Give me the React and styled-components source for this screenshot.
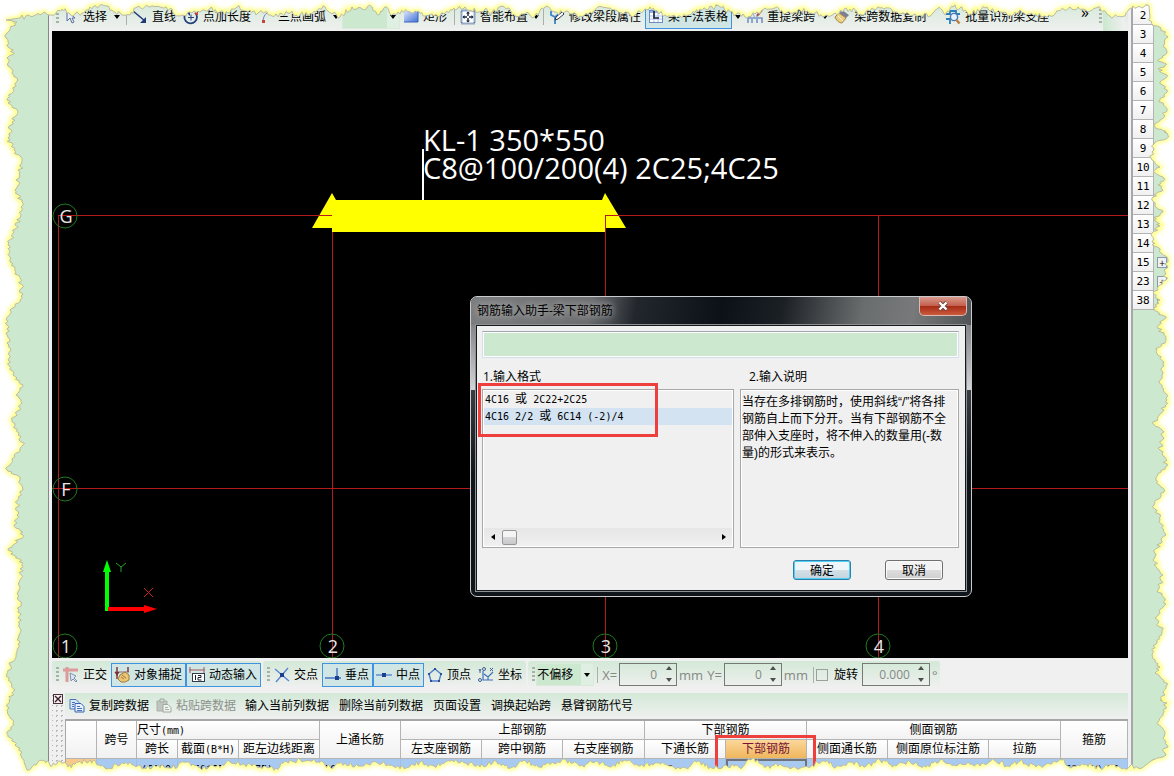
import { useState } from 'react';
import styled, { createGlobalStyle, css } from 'styled-components';

const GREEN = '#cce8cf';

const ROW_NUMBERS = [2, 3, 4, 5, 6, 7, 8, 9, 10, 11, 12, 13, 14, 15, 23, 38];
const EXPANDABLE = [15, 23, 38];

const FORMATS = [
  ['4C16 ', '或', ' 2C22+2C25'],
  ['4C16 2/2 ', '或', ' 6C14 (-2)/4'],
];

const COLUMNS = [31, 40, 41, 61, 81, 81, 81, 81, 82, 81, 81, 81, 101, 72, null];

const TOP = [
  [20, 18], [30, 16], [36, 15], [44, 12], [50, 15], [56, 13], [62, 9], [70, 14], [75, 14], [82, 13], [90, 7], [107, 6],
  [115, 12], [122, 15], [130, 15], [137, 7], [150, 7], [160, 7], [172, 9], [175, 15], [180, 16], [190, 12], [200, 12],
  [210, 8], [217, 13], [228, 13], [237, 7], [250, 10], [256, 15], [265, 12], [272, 16], [288, 13], [300, 15], [316, 12],
  [325, 7], [332, 14], [340, 17], [352, 7], [362, 9], [371, 6], [378, 15], [385, 7], [393, 14], [398, 12], [415, 11],
  [425, 16], [432, 14], [440, 16], [452, 10], [465, 7], [478, 12], [485, 9], [490, 16], [498, 8], [508, 8], [515, 16],
  [525, 14], [535, 16], [545, 7], [555, 12], [570, 14], [580, 16], [590, 12], [598, 7], [610, 8], [625, 12], [635, 15],
  [645, 9], [650, 7], [655, 11], [665, 15], [680, 16], [690, 15], [700, 9], [720, 7], [730, 12], [745, 17], [755, 14],
  [765, 8], [775, 8], [785, 14], [795, 12], [800, 10], [815, 13], [825, 16], [835, 13], [850, 9], [860, 14], [870, 11],
  [880, 8], [895, 12], [915, 14], [930, 16], [938, 8], [945, 15], [953, 7], [960, 8], [970, 14], [985, 8], [1000, 12],
  [1010, 15], [1020, 10], [1030, 14], [1045, 16], [1055, 14], [1070, 7], [1090, 11], [1098, 7], [1110, 16], [1125, 16],
  [1133, 6], [1142, 8], [1149, 6],
];

const RIGHT = [
  [1150, 18], [1153, 25], [1160, 27], [1168, 37], [1164, 45], [1167, 52], [1158, 60], [1166, 65], [1158, 69], [1167, 75],
  [1160, 82], [1167, 90], [1160, 100], [1167, 110], [1160, 120], [1153, 126], [1167, 133], [1166, 139], [1155, 142],
  [1152, 152], [1152, 160], [1160, 167], [1153, 172], [1164, 178], [1158, 185], [1163, 190], [1153, 197], [1155, 205],
  [1163, 212], [1153, 220], [1160, 226], [1152, 233], [1152, 242], [1160, 250], [1168, 260], [1164, 270], [1166, 280],
  [1160, 285], [1153, 293], [1160, 300], [1153, 308], [1166, 318], [1158, 326], [1166, 340], [1157, 350], [1164, 362],
  [1160, 380], [1167, 400], [1159, 415], [1153, 424], [1164, 432], [1160, 450], [1167, 466], [1156, 478], [1164, 492],
  [1154, 505], [1160, 520], [1166, 535], [1157, 548], [1153, 560], [1163, 575], [1158, 590], [1166, 604], [1155, 618],
  [1162, 630], [1157, 642], [1152, 655], [1160, 667], [1155, 673], [1167, 685], [1165, 695], [1160, 700], [1167, 703],
  [1163, 710], [1158, 722], [1165, 732], [1163, 738], [1167, 745], [1163, 757], [1151, 761],
];

const BOTTOM = [
  [1142, 768], [1130, 766], [1122, 769], [1112, 765], [1100, 768], [1086, 764], [1072, 767], [1062, 760], [1050, 764],
  [1036, 767], [1020, 761], [1008, 766], [994, 760], [980, 766], [968, 762], [954, 765], [940, 760], [926, 767],
  [910, 762], [896, 766], [880, 760], [866, 766], [850, 762], [836, 767], [824, 761], [812, 765], [796, 768], [780, 764],
  [766, 767], [752, 759], [740, 768], [726, 765], [712, 768], [698, 761], [686, 768], [670, 766], [655, 763], [640, 766],
  [624, 760], [610, 767], [596, 761], [580, 766], [566, 760], [552, 762], [540, 767], [524, 760], [510, 768], [496, 761],
  [480, 767], [466, 763], [450, 761], [434, 766], [420, 762], [406, 768], [392, 765], [376, 762], [360, 766], [345, 763],
  [330, 767], [318, 762], [304, 761], [290, 760], [276, 768], [260, 767], [244, 764], [230, 762], [216, 767], [200, 768],
  [186, 762], [170, 768], [158, 765], [144, 768], [130, 762], [118, 766], [104, 767], [90, 760], [78, 762], [68, 767],
  [60, 761], [52, 766], [44, 760], [36, 765], [27, 770],
];

const LEFT = [
  [24, 762], [20, 748], [8, 735], [13, 720], [7, 710], [9, 700], [15, 690], [8, 680], [10, 665], [17, 650], [21, 630],
  [19, 610], [19, 590], [23, 563], [8, 550], [23, 535], [14, 525], [17, 515], [18, 500], [23, 490], [20, 478], [7, 470],
  [12, 460], [23, 445], [18, 435], [12, 420], [22, 403], [16, 395], [23, 385], [13, 375], [8, 360], [9, 345], [7, 325],
  [10, 310], [20, 300], [22, 288], [16, 272], [10, 262], [8, 245], [14, 232], [20, 218], [23, 205], [15, 190], [19, 178],
  [22, 162], [14, 150], [8, 138], [12, 122], [18, 112], [7, 100], [14, 90], [17, 78], [8, 66], [7, 58], [14, 53], [8, 47],
  [6, 38], [10, 30], [17, 22], [6, 20],
];

// same rough outline on every render
const tornPath = () => {
  let seed = 7;
  const rand = () => {
    seed = (seed * 16807) % 2147483647;
    return seed / 2147483647 - 0.5;
  };
  const side = (points, horizontal) => {
    const out = [];
    points.forEach(([x, y], i) => {
      out.push([x, y]);
      const next = points[i + 1];
      if (!next) return;
      const steps = Math.max(1, Math.round(Math.hypot(next[0] - x, next[1] - y) / 2));
      for (let s = 1; s < steps; s++) {
        const px = x + ((next[0] - x) * s) / steps;
        const py = y + ((next[1] - y) * s) / steps;
        const n = rand() * 5;
        out.push(horizontal ? [px, py + n] : [px + n, py]);
      }
    });
    return out;
  };
  const all = [...side(TOP, true), ...side(RIGHT, false), ...side(BOTTOM, true), ...side(LEFT, false)];
  return `M${all.map(([x, y]) => `${x.toFixed(1)} ${y.toFixed(1)}`).join('L')}Z`;
};

const TORN = tornPath();

const TornEdge = () => (
  <Torn viewBox="0 0 1174 776" preserveAspectRatio="none" aria-hidden="true">
    <defs>
      <clipPath id="outside">
        <path d={`M0 0H1174V776H0Z${TORN}`} clipRule="evenodd" />
      </clipPath>
      <filter id="glow" x="-5%" y="-5%" width="110%" height="110%">
        <feGaussianBlur stdDeviation="2" />
      </filter>
    </defs>
    <g clipPath="url(#outside)">
      <rect width="1174" height="776" fill="#fff" />
      <path d={TORN} fill="none" stroke="#ffff70" strokeWidth="4" filter="url(#glow)" />
    </g>
    <path d={TORN} fill="none" stroke="#b9baa6" strokeWidth="1" />
  </Torn>
);

const Icon = ({ children }) => (
  <svg width="16" height="16" viewBox="0 0 16 16" fill="none" aria-hidden="true">
    {children}
  </svg>
);

const SelectIcon = () => (
  <Icon>
    <path d="M4 2v10l3-3 2 5 2-1-2-4h3z" fill="#e8eefa" stroke="#5a6f9c" />
  </Icon>
);

const LineIcon = () => (
  <Icon>
    <path d="M1 2l12 10" stroke="#1f3c78" strokeWidth="1.6" />
    <path d="M14 14V8l-6 6z" fill="#1f3c78" />
  </Icon>
);

const CircleIcon = () => (
  <Icon>
    <path d="M12 3.5A6.3 6.3 0 1 1 4 3" stroke="#24417c" strokeWidth="1.8" />
    <path d="M1 1h6v6z" fill="#24417c" />
    <path d="M8 5.500v6M5 8.500h6" stroke="#24417c" />
    <rect x="12" y="3" width="3" height="3" fill="#c8423c" />
  </Icon>
);

const ArcIcon = () => (
  <Icon>
    <path d="M5 13C5 7 8 3 14 2" stroke="#6d7fae" />
    <rect x="4" y="11" width="3" height="3" fill="#c8423c" />
    <rect x="13" y="1" width="2" height="2" fill="#c8423c" />
  </Icon>
);

const RectIcon = () => (
  <Icon>
    <rect x="1" y="2" width="14" height="11" fill="url(#blueFade)" />
    <path d="M1 13h14V2" stroke="#3a62b8" />
    <defs>
      <linearGradient id="blueFade" x1="0" y1="0" x2="1" y2="1">
        <stop offset="0" stopColor="#dbe6fb" />
        <stop offset="1" stopColor="#3f6fd6" />
      </linearGradient>
    </defs>
  </Icon>
);

const LayoutIcon = () => (
  <Icon>
    <rect x="1.500" y="1.500" width="13" height="13" fill="#fff" stroke="#3c5c96" strokeDasharray="1 1" strokeWidth="2" />
    <path d="M8 3v4M8 9v4M3 8h4M9 8h4" stroke="#1c2740" strokeWidth="1.4" />
    <path d="M8 2.500l2 2H6zM8 13.500l2-2H6zM2.500 8l2-2v4zM13.500 8l-2-2v4z" fill="#1c2740" />
  </Icon>
);

const EditIcon = () => (
  <Icon>
    <path d="M2 2v4l4 2v7M6 8l4-3" stroke="#3a86c8" strokeWidth="1.8" />
    <path d="M6 11l1-3 6-5 2 2-6 5z" fill="#fff" stroke="#2d3442" />
  </Icon>
);

const TableIcon = () => (
  <Icon>
    <rect x="1.500" y="1.500" width="13" height="12" fill="#fff" stroke="#6a8bc4" />
    <path d="M2 3h12" stroke="#8fb0e4" strokeWidth="2" />
    <path d="M2 7h12M2 10h12M6 4v9M10 4v9" stroke="#a7bfe6" />
    <path d="M6 2v7h5" stroke="#15203c" strokeWidth="1.6" />
  </Icon>
);

const SpanIcon = () => (
  <Icon>
    <path d="M1 14V9h14v5M5 14v-4M10 14v-4" stroke="#7693c6" strokeWidth="1.6" />
    <path d="M2 9l3-6 3 6M9 9l2-5" stroke="#93a9cf" />
    <path d="M10 7l5-6" stroke="#b0574f" strokeWidth="2" />
  </Icon>
);

const BrushIcon = () => (
  <Icon>
    <path d="M8 1l7 5-3 3-7-5z" fill="#7a7f96" />
    <path d="M5 4l7 5-4 5C5 14 2 11 1 8z" fill="#e9cf86" stroke="#a8863c" />
    <path d="M4 7l5 5" stroke="#fff4d0" />
  </Icon>
);

const FindIcon = () => (
  <Icon>
    <path d="M1 5h4V1M11 1v4h4M1 10h4v5M11 2H5" stroke="#2c7fb8" strokeWidth="1.8" />
    <circle cx="9" cy="8" r="3.600" fill="#e6f2ff" stroke="#4877b0" strokeWidth="1.4" />
    <path d="M11.500 11l3 3.500" stroke="#c07a3a" strokeWidth="2.400" />
  </Icon>
);

const OrthoIcon = () => (
  <Icon>
    <path d="M0 3h15M4 0v15" stroke="#dd9a9a" strokeWidth="3" />
    <path d="M7 6l1 8 2-2 3 3 1-1-3-3 2-2z" fill="#dce6f2" stroke="#7d93ad" />
  </Icon>
);

const SnapIcon = () => (
  <Icon>
    <path d="M1 5h14" stroke="#8b6b6b" />
    <path d="M3 0v12M14 0v5" stroke="#7a2f38" strokeWidth="1.400" />
    <path d="M0.500 5l2.500 4 2.500-4z" fill="#7a2f38" />
    <path d="M6 8l5-3 4 3v5l-4 2H7l-3-3z" fill="#ecc677" stroke="#a27a35" />
    <path d="M8 8l4 3M7 10l3 2" stroke="#a27a35" />
  </Icon>
);

const DynamicIcon = () => (
  <Icon>
    <path d="M0 3h16M1 0v6M15 0v6" stroke="#a3585c" />
    <rect x="3.500" y="6.500" width="12" height="8" fill="#fff" stroke="#333b4a" />
    <path d="M6.500 8v5M9 8.500h3v2H9v2.500h3.500" stroke="#1b2230" />
  </Icon>
);

const CrossIcon = () => (
  <Icon>
    <path d="M1 2l14 12M14 1L2 15" stroke="#5a84d2" strokeWidth="1.400" />
    <rect x="6" y="6" width="4" height="4" fill="#1d3f8f" />
  </Icon>
);

const PerpIcon = () => (
  <Icon>
    <path d="M0 11h16M12 1v10" stroke="#4474c4" strokeWidth="1.400" />
    <rect x="10" y="9" width="4" height="4" fill="#1d3f8f" />
  </Icon>
);

const MidIcon = () => (
  <Icon>
    <path d="M0 8h16" stroke="#5a84d2" strokeWidth="1.400" />
    <rect x="6" y="6" width="4" height="4" fill="#1d3f8f" />
  </Icon>
);

const VertexIcon = () => (
  <Icon>
    <path d="M8 2l6 5-2 7H4L2 7z" stroke="#4f7cc8" strokeWidth="1.400" />
    <path d="M7 1h2v2H7zM1 6h2v2H1zM13 6h2v2h-2zM3 13h2v2H3zM11 13h2v2h-2z" fill="#2a4f9c" />
  </Icon>
);

const CoordIcon = () => (
  <Icon>
    <path d="M5 4v9h10M6 7l4 3 5-5M10 10v3" stroke="#3c70b8" strokeWidth="1.200" />
    <circle cx="6" cy="2" r="1.500" stroke="#3c5f98" />
    <circle cx="2" cy="13" r="1.500" stroke="#3c5f98" />
    <path d="M1 2l1 2 1-2M2 4v2M12 1l3 3M15 1l-3 3" stroke="#3c5f98" />
  </Icon>
);

const CopyIcon = () => (
  <Icon>
    <path d="M1 1.500h6l3 3V11H1z" fill="#d9e6fb" stroke="#4b74b8" />
    <path d="M6 5.500h6l3 3V14H6z" fill="#e8f0ff" stroke="#3864ad" />
    <path d="M8 8.500h3M8 10.500h5M8 12.500h5M3 4.500h3M3 6.500h2M3 8.500h2" stroke="#4b74b8" />
  </Icon>
);

const PasteIcon = () => (
  <Icon>
    <path d="M1 3h10v10H1z" fill="#bfc6bf" stroke="#a9b1a9" />
    <path d="M4 1h4v3H4z" fill="#d9ded9" stroke="#a0a8a0" />
    <path d="M7 6.500h5l3 3V14H7z" fill="#eef2ee" stroke="#a0a8a0" />
    <path d="M9 9.500h3M9 11.500h4" stroke="#a9b1a9" />
  </Icon>
);

const Triangle = ({ dir = 'down' }) => {
  const shapes = { down: 'M0 1h6L3 5z', up: 'M0 4h6L3 0z', left: 'M5 0v6L1 3z', right: 'M1 0v6l4-3z' };
  return (
    <svg width="6" height="6" viewBox="0 0 6 6" aria-hidden="true">
      <path d={shapes[dir]} fill="currentColor" />
    </svg>
  );
};

const Tool = ({ icon, label, active, disabled }) => (
  <ToolButton type="button" $active={active} disabled={disabled}>
    {icon}
    {label}
  </ToolButton>
);

const Spinner = ({ id, value, wide }) => (
  <SpinBox $wide={wide}>
    <SpinInput id={id} defaultValue={value} disabled />
    <SpinArrows>
      <SpinButton type="button" aria-label="增加">
        <Triangle dir="up" />
      </SpinButton>
      <SpinButton type="button" aria-label="减少">
        <Triangle />
      </SpinButton>
    </SpinArrows>
  </SpinBox>
);

const MainToolbar = () => (
  <TopBar>
    <Grip />
    <Tool icon={<SelectIcon />} label="选择" />
    <Caret type="button" aria-label="选择选项"><Triangle /></Caret>
    <Divider />
    <Tool icon={<LineIcon />} label="直线" />
    <Tool icon={<CircleIcon />} label="点加长度" />
    <Tool icon={<ArcIcon />} label="三点画弧" />
    <Caret type="button" aria-label="弧选项"><Triangle /></Caret>
    <ComboBox>
      <Combo aria-label="画法" />
      <ComboArrow><Triangle /></ComboArrow>
    </ComboBox>
    <Tool icon={<RectIcon />} label="矩形" />
    <Divider />
    <Tool icon={<LayoutIcon />} label="智能布置" />
    <Caret type="button" $narrow aria-label="布置选项"><Triangle /></Caret>
    <Divider />
    <Tool icon={<EditIcon />} label="修改梁段属性" />
    <Tool icon={<TableIcon />} label="梁平法表格" active />
    <Caret type="button" aria-label="表格选项"><Triangle /></Caret>
    <Tool icon={<SpanIcon />} label="重提梁跨" />
    <Caret type="button" aria-label="梁跨选项"><Triangle /></Caret>
    <Tool icon={<BrushIcon />} label="梁跨数据复制" />
    <Spacer $width={12} />
    <Tool icon={<FindIcon />} label="批量识别梁支座" />
    <More>»</More>
    <Grip />
    <Patch />
  </TopBar>
);

const Bubble = ({ x, y, text }) => (
  <g>
    <circle cx={x} cy={y} r="12" fill="none" stroke="#1d7a22" />
    <text x={x + 1} y={y + 7} fill="#e8e8e8" fontSize="18" textAnchor="middle">{text}</text>
  </g>
);

const Drawing = () => (
  <Plan>
    <g stroke="#b41c1c" shapeRendering="crispEdges">
      <path d="M6.500 184V627M280.500 184V627M553.500 184V627M826.500 184V627" />
      <line x1="6" y1="184.500" x2="280" y2="184.500" />
      <line x1="0" y1="457.500" x2="100%" y2="457.500" />
    </g>
    <path d="M260 197l20-35 4 7h266l3-7 21 35h-20v4H280v-4z" fill="#ff0" />
    <g stroke="#b41c1c" shapeRendering="crispEdges">
      <line x1="260" y1="184.500" x2="280" y2="184.500" />
      <line x1="553" y1="184.500" x2="100%" y2="184.500" />
      <line x1="553.500" y1="184" x2="553.500" y2="210" />
    </g>
    <path d="M371 118v51" stroke="#fff" strokeWidth="2" />
    <g fill="#fff" fontSize="29">
      <text x="371" y="120">KL-1 350*550</text>
      <text x="371" y="148">C8@100/200(4) 2C25;4C25</text>
    </g>
    <Bubble x={13} y={185} text="G" />
    <Bubble x={13} y={458} text="F" />
    <Bubble x={13} y={615} text="1" />
    <Bubble x={280} y={615} text="2" />
    <Bubble x={553} y={615} text="3" />
    <Bubble x={826} y={615} text="4" />
    <path d="M55 580V540" stroke="#0f0" strokeWidth="4" />
    <path d="M51 541l4-12 4 12z" fill="#0f0" />
    <path d="M56 578H94" stroke="#f00" strokeWidth="4" />
    <path d="M92 574l13 4-13 4z" fill="#f00" />
    <path d="M64 532l5 4 5-4M69 536v5" stroke="#28a428" fill="none" />
    <path d="M92 557l9 9M101 557l-9 9" stroke="#c82020" fill="none" />
  </Plan>
);

const RebarDialog = () => {
  const [selected, setSelected] = useState(1);
  const [value, setValue] = useState('');

  return (
    <Window role="dialog" aria-labelledby="dialogTitle">
      <TitleBar>
        <Title id="dialogTitle">钢筋输入助手-梁下部钢筋</Title>
        <CloseButton type="button" aria-label="关闭">
          <svg width="12" height="10" viewBox="0 0 12 10" aria-hidden="true">
            <path d="M2.500 1.500l7 7M9.500 1.500l-7 7" stroke="#6b4040" strokeWidth="4" />
            <path d="M2.500 1.500l7 7M9.500 1.500l-7 7" stroke="#fff" strokeWidth="2.400" />
          </svg>
        </CloseButton>
      </TitleBar>
      <Body>
        <RebarInput aria-label="钢筋" value={value} onChange={(event) => setValue(event.target.value)} />
        <Columns>
          <Caption id="formatLabel">1.输入格式</Caption>
          <Caption $indent>2.输入说明</Caption>
          <Pane>
            <FormatList role="listbox" aria-labelledby="formatLabel">
              {FORMATS.map(([before, or, after], i) => (
                <Format
                  key={after}
                  role="option"
                  aria-selected={i === selected}
                  $selected={i === selected}
                  onClick={() => setSelected(i)}
                >
                  <Mono>{before}</Mono>
                  {or}
                  <Mono>{after}</Mono>
                </Format>
              ))}
            </FormatList>
            <ScrollBar>
              <ScrollButton type="button" aria-label="向左"><Triangle dir="left" /></ScrollButton>
              <Thumb />
              <ScrollButton type="button" aria-label="向右"><Triangle dir="right" /></ScrollButton>
            </ScrollBar>
            <FormatMark />
          </Pane>
          <Pane>
            <Help>
              当存在多排钢筋时，使用斜线“/”将各排
              <br />
              钢筋自上而下分开。当有下部钢筋不全
              <br />
              部伸入支座时，将不伸入的数量用(-数
              <br />
              量)的形式来表示。
            </Help>
          </Pane>
        </Columns>
        <Actions>
          <DialogButton type="button" $primary>确定</DialogButton>
          <DialogButton type="button">取消</DialogButton>
        </Actions>
      </Body>
    </Window>
  );
};

const SnapToolbar = () => (
  <SnapBar>
    <Group>
      <Grip />
      <Tool icon={<OrthoIcon />} label="正交" />
      <Tool icon={<SnapIcon />} label="对象捕捉" active />
      <Tool icon={<DynamicIcon />} label="动态输入" active />
    </Group>
    <Group>
      <Grip />
      <Tool icon={<CrossIcon />} label="交点" />
      <Tool icon={<PerpIcon />} label="垂点" active />
      <Tool icon={<MidIcon />} label="中点" active />
      <Tool icon={<VertexIcon />} label="顶点" />
      <Tool icon={<CoordIcon />} label="坐标" />
    </Group>
    <Group>
      <Grip />
      <ComboBox>
        <Combo aria-label="偏移">
          <option>不偏移</option>
        </Combo>
        <ComboArrow><Triangle /></ComboArrow>
      </ComboBox>
      <Divider />
      <Unit as="label" htmlFor="offsetX">X=</Unit>
      <Spinner id="offsetX" value="0" />
      <Unit>mm</Unit>
      <Unit as="label" htmlFor="offsetY">Y=</Unit>
      <Spinner id="offsetY" value="0" />
      <Unit>mm</Unit>
      <Divider />
      <CheckBox type="checkbox" id="rotate" />
      <RotateLabel htmlFor="rotate">旋转</RotateLabel>
      <Spinner id="angle" value="0.000" wide />
      <Unit as="label" htmlFor="angle">°</Unit>
    </Group>
  </SnapBar>
);

const BeamTable = () => (
  <Panel>
    <PanelEdge>
      <PanelClose type="button" aria-label="关闭表格">
        <svg width="10" height="10" viewBox="0 0 10 10" aria-hidden="true">
          <rect x="0.500" y="0.500" width="9" height="9" fill="#f4f0f0" stroke="#4a3038" />
          <path d="M2 2l6 6M8 2L2 8" stroke="#3a2028" strokeWidth="1.400" />
        </svg>
      </PanelClose>
    </PanelEdge>
    <PanelMain>
      <PanelBar>
        <Tool icon={<CopyIcon />} label="复制跨数据" />
        <Tool icon={<PasteIcon />} label="粘贴跨数据" disabled />
        <TextButton type="button">输入当前列数据</TextButton>
        <TextButton type="button">删除当前列数据</TextButton>
        <TextButton type="button">页面设置</TextButton>
        <TextButton type="button">调换起始跨</TextButton>
        <TextButton type="button">悬臂钢筋代号</TextButton>
      </PanelBar>
      <Table>
        <colgroup>
          {COLUMNS.map((width, i) => (
            <col key={i} width={width ?? undefined} />
          ))}
        </colgroup>
        <thead>
          <tr>
            <Th rowSpan="2" />
            <Th rowSpan="2">跨号</Th>
            <Th colSpan="3" $left>尺寸<Mono>(mm)</Mono></Th>
            <Th rowSpan="2">上通长筋</Th>
            <Th colSpan="3">上部钢筋</Th>
            <Th colSpan="2">下部钢筋</Th>
            <Th colSpan="3">侧面钢筋</Th>
            <Th rowSpan="2">箍筋</Th>
          </tr>
          <tr>
            <Th>跨长</Th>
            <Th>截面<Mono>(B*H)</Mono></Th>
            <Th>距左边线距离</Th>
            <Th>左支座钢筋</Th>
            <Th>跨中钢筋</Th>
            <Th>右支座钢筋</Th>
            <Th>下通长筋</Th>
            <Th $current>
              下部钢筋
              <HeaderMark />
            </Th>
            <Th>侧面通长筋</Th>
            <Th>侧面原位标注筋</Th>
            <Th>拉筋</Th>
          </tr>
        </thead>
        <tbody>
          <tr>
            <Td $head />
            <Td />
            <Td>(6000)</Td>
            <Td>(350*550)</Td>
            <Td>(175)</Td>
            <Td>2C25</Td>
            <Td />
            <Td />
            <Td />
            <Td>4C25</Td>
            <Td $current />
            <Td />
            <Td />
            <Td />
            <Td>C8@100/20</Td>
          </tr>
        </tbody>
      </Table>
    </PanelMain>
  </Panel>
);

const App = () => (
  <>
    <GlobalStyle />
    <Page>
      <LeftSide />
      <Work>
        <MainToolbar />
        <Canvas>
          <Drawing />
          <RebarDialog />
        </Canvas>
        <SnapToolbar />
        <BeamTable />
      </Work>
      <RightSide>
        <Numbers>
          {ROW_NUMBERS.map((n) => (
            <NumberRow key={n}>
              <RowNumber>{n}</RowNumber>
              {EXPANDABLE.includes(n) && <Expand type="button" aria-label={`展开 ${n}`}>+</Expand>}
            </NumberRow>
          ))}
        </Numbers>
      </RightSide>
      <TornEdge />
    </Page>
  </>
);

export default App;

const GlobalStyle = createGlobalStyle`
  * {
    box-sizing: border-box;
  }
  body {
    margin: 0;
    color: #000;
    font-family: "Open Sans", "Noto Sans CJK SC", sans-serif;
    font-size: 12px;
    line-height: 16px;
  }
  button, input, select {
    margin: 0;
    padding: 0;
    border: none;
    background: none;
    color: inherit;
    font: inherit;
  }
`;

const Page = styled.div`
  position: relative;
  display: grid;
  grid-template-columns: 52px minmax(0, 1fr) 46px;
  height: 100vh;
  overflow: hidden;
  background: #f0f0f0;
`;

const Torn = styled.svg`
  position: absolute;
  z-index: 2;
  inset: 0;
  width: 100%;
  height: 100%;
  pointer-events: none;
`;

const LeftSide = styled.aside`
  margin-right: 3px;
  border-right: 1px solid #85888c;
  background: ${GREEN};
`;

const RightSide = styled.aside`
  margin-left: 3px;
  padding-top: 6px;
  border-left: 2px solid #a6a6ac;
  background: ${GREEN};
`;

const Work = styled.main`
  display: flex;
  flex-direction: column;
  min-height: 0;
`;

const barFill = css`
  background: linear-gradient(#d3e9d7, #f0f0f0);
`;

const TopBar = styled.div`
  ${barFill}
  display: flex;
  align-items: center;
  height: 31px;
  padding-top: 3px;
  white-space: nowrap;
`;

const Grip = styled.span`
  flex: none;
  width: 3px;
  height: 16px;
  margin: 0 1px 0 4px;
  background: repeating-linear-gradient(#a5b2a8 0 2px, transparent 2px 4px);
`;

const ToolButton = styled.button`
  display: flex;
  flex: none;
  align-items: center;
  gap: 4px;
  height: 24px;
  padding: 0 3px 0 2px;
  border: 1px solid ${({ $active }) => ($active ? '#3f93e0' : 'transparent')};
  background: ${({ $active }) => ($active ? '#cfe6e4' : 'transparent')};
  white-space: nowrap;
  &:disabled {
    color: #8c918c;
  }
`;

const TextButton = styled.button`
  flex: none;
  padding: 0 5px;
`;

const Caret = styled.button`
  display: grid;
  flex: none;
  place-items: center;
  width: ${({ $narrow }) => ($narrow ? 8 : 12)}px;
  height: 24px;
`;

const Divider = styled.span`
  flex: none;
  width: 1px;
  height: 16px;
  margin: 0 2px 0 3px;
  background: #a9b0ab;
`;

const Spacer = styled.span`
  width: ${({ $width }) => $width}px;
`;

const More = styled.span`
  margin: 0 6px 10px auto;
  font-size: 16px;
`;

const Patch = styled.span`
  width: 22px;
  height: 100%;
  margin-right: 3px;
  background: linear-gradient(to right, ${GREEN}, #f0f0f0);
`;

const ComboBox = styled.span`
  position: relative;
  display: flex;
  flex: none;
  width: 58px;
  height: 23px;
  border: 1px solid #d9eadc;
  background: ${GREEN};
`;

const Combo = styled.select`
  appearance: none;
  width: 100%;
`;

const ComboArrow = styled.span`
  position: absolute;
  inset: 0 0 0 auto;
  display: grid;
  place-items: center;
  width: 12px;
  background: #dfefe2;
  pointer-events: none;
`;

const Canvas = styled.section`
  position: relative;
  flex: 1;
  min-height: 0;
  overflow: hidden;
  background: #000;
`;

const Plan = styled.svg`
  display: block;
  width: 100%;
  height: 100%;
  font-family: "Open Sans", sans-serif;
`;

const Window = styled.div`
  position: absolute;
  top: 265px;
  left: 418px;
  width: 502px;
  padding: 0 5px 5px;
  border: 1px solid #c9ccce;
  border-radius: 7px;
  background: linear-gradient(#66696b, #8c8e90 12%, #d4d5d6 31%, #3b3f42 31%, #10141b 60%);
`;

const TitleBar = styled.div`
  display: flex;
  align-items: center;
  justify-content: space-between;
  height: 28px;
  margin: 0 -5px;
  padding: 0 4px 0 6px;
  border-radius: 6px 6px 0 0;
  background: linear-gradient(
    100deg,
    #7b7d7f,
    #6c6e70 24%,
    #22272d 33%,
    #0c1118 50%,
    #1b2025 62%,
    #6a6d6e 78%,
    #77797a 88%,
    #515456
  );
`;

const Title = styled.span`
  text-shadow: 0 0 6px #b4b4b4, 0 0 10px #a8a8a8;
`;

const CloseButton = styled.button`
  display: grid;
  align-self: flex-start;
  place-items: center;
  width: 48px;
  height: 19px;
  border: 1px solid #d8b9b4;
  border-top: none;
  border-radius: 0 0 5px 5px;
  background: linear-gradient(#d99a8d, #c4604e 48%, #a42a15 50%, #cc5a3c);
`;

const Body = styled.div`
  padding: 5px 6px 10px 5px;
  border: 1px solid #16191c;
  outline: 1px solid #8d9194;
  background: #f0f0f0;
`;

const RebarInput = styled.input`
  display: block;
  width: 100%;
  height: 27px;
  padding: 0 4px;
  border: 1px solid #d5dfea;
  border-top-color: #9fa8ae;
  outline: none;
  background: ${GREEN};
  box-shadow: inset 0 0 0 1px #fff;
`;

const Columns = styled.div`
  display: grid;
  grid-template-columns: 252px minmax(0, 1fr);
  column-gap: 6px;
`;

const Caption = styled.span`
  height: 31px;
  padding: 11px 0 0 ${({ $indent }) => ($indent ? 9 : 1)}px;
`;

const Pane = styled.div`
  position: relative;
  display: flex;
  flex-direction: column;
  justify-content: space-between;
  height: 159px;
  padding: 1px;
  border: 1px solid #a8a8a8;
  box-shadow: inset 0 0 0 1px #fff;
`;

const FormatList = styled.ul`
  margin: 0;
  padding: 0;
  list-style: none;
`;

const Format = styled.li`
  height: 17px;
  padding-left: 1px;
  background: ${({ $selected }) => ($selected ? '#d3e3f2' : 'transparent')};
  line-height: 16px;
  white-space: pre;
`;

const Mono = styled.span`
  font-family: "DejaVu Sans Mono", monospace;
  font-size: 10px;
`;

const FormatMark = styled.span`
  position: absolute;
  top: -7px;
  left: -5px;
  width: 180px;
  height: 54px;
  border: 3px solid #ee3f3c;
  pointer-events: none;
`;

const ScrollBar = styled.div`
  display: flex;
  align-items: center;
  height: 18px;
  background: linear-gradient(#e6e6e6, #f0f0f0);
`;

const ScrollButton = styled.button`
  display: grid;
  place-items: center;
  width: 17px;
  height: 17px;
`;

const Thumb = styled.span`
  width: 15px;
  height: 15px;
  margin: 0 auto 0 1px;
  border: 1px solid #979797;
  border-radius: 2px;
  background: linear-gradient(#f4f4f4 45%, #d6d6d9 50%, #c9c9cc);
`;

const Help = styled.p`
  margin: 3px 0 0;
  font-family: "Liberation Sans", "Noto Sans CJK SC", sans-serif;
  line-height: 17px;
  white-space: nowrap;
`;

const Actions = styled.div`
  display: flex;
  justify-content: flex-end;
  gap: 34px;
  padding: 12px 16px 0 0;
`;

const DialogButton = styled.button`
  width: 58px;
  height: 20px;
  border: 1px solid ${({ $primary }) => ($primary ? '#2f7fa8' : '#707070')};
  border-radius: 3px;
  background: ${({ $primary }) =>
    $primary
      ? 'linear-gradient(#eef6fa 48%, #d3e0e8 50%, #c5d3dc)'
      : 'linear-gradient(#f3f3f3 48%, #dddddf 50%, #cfcfcf)'};
  box-shadow: inset 0 0 0 1px ${({ $primary }) => ($primary ? '#4fd0f4' : '#fafafa')};
  line-height: 20px;
`;

const SnapBar = styled.div`
  display: flex;
  flex: none;
  gap: 2px;
  height: 35px;
  padding: 3px 0 5px;
`;

const Group = styled.div`
  ${barFill}
  display: flex;
  align-items: center;
  border-radius: 3px;
`;

const Unit = styled.span`
  padding: 0 2px;
  color: #858985;
  font-size: 13px;
`;

const SpinBox = styled.span`
  display: flex;
  width: ${({ $wide }) => ($wide ? 68 : 58)}px;
  height: 23px;
  border: 1px solid #757a76;
`;

const SpinInput = styled.input`
  flex: 1;
  min-width: 0;
  padding-right: 4px;
  color: #858985;
  text-align: right;
`;

const SpinArrows = styled.span`
  display: flex;
  flex-direction: column;
  width: 15px;
  color: #4c504d;
`;

const SpinButton = styled.button`
  display: grid;
  flex: 1;
  place-items: center;
  line-height: 0;
`;

const CheckBox = styled.input`
  appearance: none;
  width: 12px;
  height: 12px;
  border: 1px solid #9aa09c;
`;

const RotateLabel = styled.label`
  padding: 0 4px 0 6px;
`;

const Panel = styled.section`
  display: flex;
  flex: none;
  height: 83px;
  overflow: hidden;
`;

const PanelEdge = styled.div`
  width: 13px;
  padding-left: 1px;
  background: radial-gradient(circle, #b9b9b9 1px, transparent 1px) 2px 0 / 5px 5px;
`;

const PanelClose = styled.button`
  display: block;
  height: 12px;
  background: #f0f0f0;
  line-height: 0;
`;

const PanelMain = styled.div`
  flex: 1;
  min-width: 0;
`;

const PanelBar = styled.div`
  ${barFill}
  display: flex;
  align-items: center;
  height: 26px;
  padding-left: 1px;
`;

const Table = styled.table`
  width: 100%;
  border-collapse: separate;
  border-spacing: 0;
  border-top: 2px solid #a6a6a6;
  border-left: 1px solid #a6a6a6;
  table-layout: fixed;
`;

const Th = styled.th`
  position: relative;
  height: 19px;
  padding: 0;
  border-right: 1px solid #b4b4b4;
  border-bottom: 1px solid #b4b4b4;
  background: ${({ $current }) =>
    $current ? 'linear-gradient(#fbd79a, #efb65c)' : 'linear-gradient(#ffffff, #f1f1f1)'};
  color: ${({ $current }) => ($current ? '#7a1238' : '#000')};
  font-weight: 400;
  text-align: ${({ $left }) => ($left ? 'left' : 'center')};
  white-space: nowrap;
`;

const HeaderMark = styled.span`
  position: absolute;
  z-index: 1;
  top: -5px;
  left: -11px;
  width: 101px;
  height: 60px;
  border: 3px solid #ee3f3c;
  pointer-events: none;
`;

const Td = styled.td`
  height: 22px;
  padding: 0 4px;
  overflow: hidden;
  border-right: 1px solid #9dbfe8;
  background: ${({ $head }) => ($head ? '#f8c98b' : '#a9caf0')};
  font-family: "DejaVu Sans Mono", monospace;
  font-size: 10px;
  ${({ $current }) =>
    $current &&
    css`
      border: 2px solid #6f7378;
    `}
`;

const Numbers = styled.ul`
  margin: 0;
  padding: 0;
  list-style: none;
`;

const NumberRow = styled.li`
  display: flex;
  align-items: center;
  height: 19px;
`;

const RowNumber = styled.span`
  width: 21px;
  height: 19px;
  border-right: 1px solid #b4b4b4;
  border-bottom: 1px solid #b4b4b4;
  background: linear-gradient(#ffffff, #f0f0f0);
  font-family: "DejaVu Sans Mono", monospace;
  font-size: 11px;
  line-height: 20px;
  text-align: center;
`;

const Expand = styled.button`
  width: 10px;
  height: 11px;
  margin-left: 3px;
  border: 1px solid #8f9aa8;
  background: #eef2f8;
  font-size: 10px;
  line-height: 8px;
`;
